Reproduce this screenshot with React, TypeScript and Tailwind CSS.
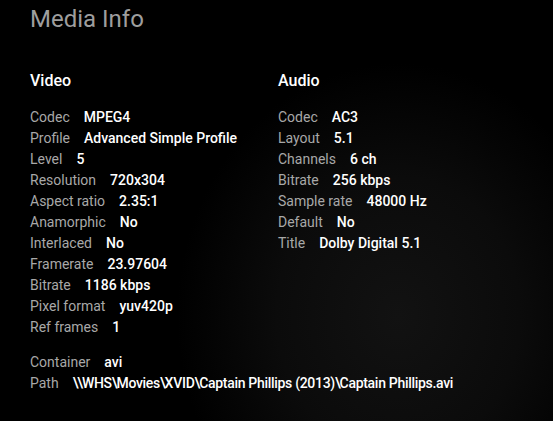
import React from "react";

type Row = [string, React.ReactNode];

const video: Row[] = [
  ["Codec", "MPEG4"],
  ["Profile", "Advanced Simple Profile"],
  ["Level", "5"],
  ["Resolution", "720x304"],
  ["Aspect ratio", "2.35:1"],
  ["Anamorphic", "No"],
  ["Interlaced", "No"],
  ["Framerate", "23.97604"],
  ["Bitrate", "1186 kbps"],
  ["Pixel format", "yuv420p"],
  ["Ref frames", "1"],
];

const audio: Row[] = [
  ["Codec", "AC3"],
  ["Layout", "5.1"],
  ["Channels", "6 ch"],
  ["Bitrate", "256 kbps"],
  ["Sample rate", "48000 Hz"],
  ["Default", "No"],
  ["Title", "Dolby Digital 5.1"],
];

function Rows({ rows }: { rows: Row[] }) {
  return (
    <div className="flex flex-col">
      {rows.map(([k, v]) => (
        <div key={k} className="flex h-[21px] items-center text-[14px] leading-[21px] whitespace-nowrap">
          <span className="text-[#a8a8a8] mr-[14px]">{k}</span>
          <span className="text-white font-medium">{v}</span>
        </div>
      ))}
    </div>
  );
}

function PathValue({ text }: { text: string }) {
  const parts = text.split(/(\\)/);
  return (
    <span className="tracking-[-0.3px]">
      {parts.map((p, i) =>
        p === "\\" ? (
          <span key={i} className="tracking-[-1.2px]">
            {"\\"}
          </span>
        ) : (
          <span key={i}>{p}</span>
        )
      )}
    </span>
  );
}

export default function App() {
  return (
    <div
      className="w-[553px] h-[421px] overflow-hidden bg-black bg-[radial-gradient(ellipse_40%_60%_at_72%_75%,#121212_0%,#0b0b0b_55%,#000000_100%)] pl-[30px] pt-[5px]"
      style={{ fontFamily: "Roboto, 'Noto Sans', sans-serif" }}
    >
      <div className="text-[24px] leading-[28px] text-[#9e9e9e]">Media Info</div>
      <div className="flex mt-[38px]">
        <div className="w-[248px] flex flex-col">
          <div className="text-[16px] leading-[20px] text-white font-medium mb-[16px]">Video</div>
          <Rows rows={video} />
        </div>
        <div className="flex flex-col">
          <div className="text-[16px] leading-[20px] text-white font-medium mb-[16px]">Audio</div>
          <Rows rows={audio} />
        </div>
      </div>
      <div className="mt-[14px]">
        <Rows
          rows={[
            ["Container", "avi"],
            [
              "Path",
              <PathValue text={"\\\\WHS\\Movies\\XVID\\Captain Phillips (2013)\\Captain Phillips.avi"} />,
            ],
          ]}
        />
      </div>
    </div>
  );
}
